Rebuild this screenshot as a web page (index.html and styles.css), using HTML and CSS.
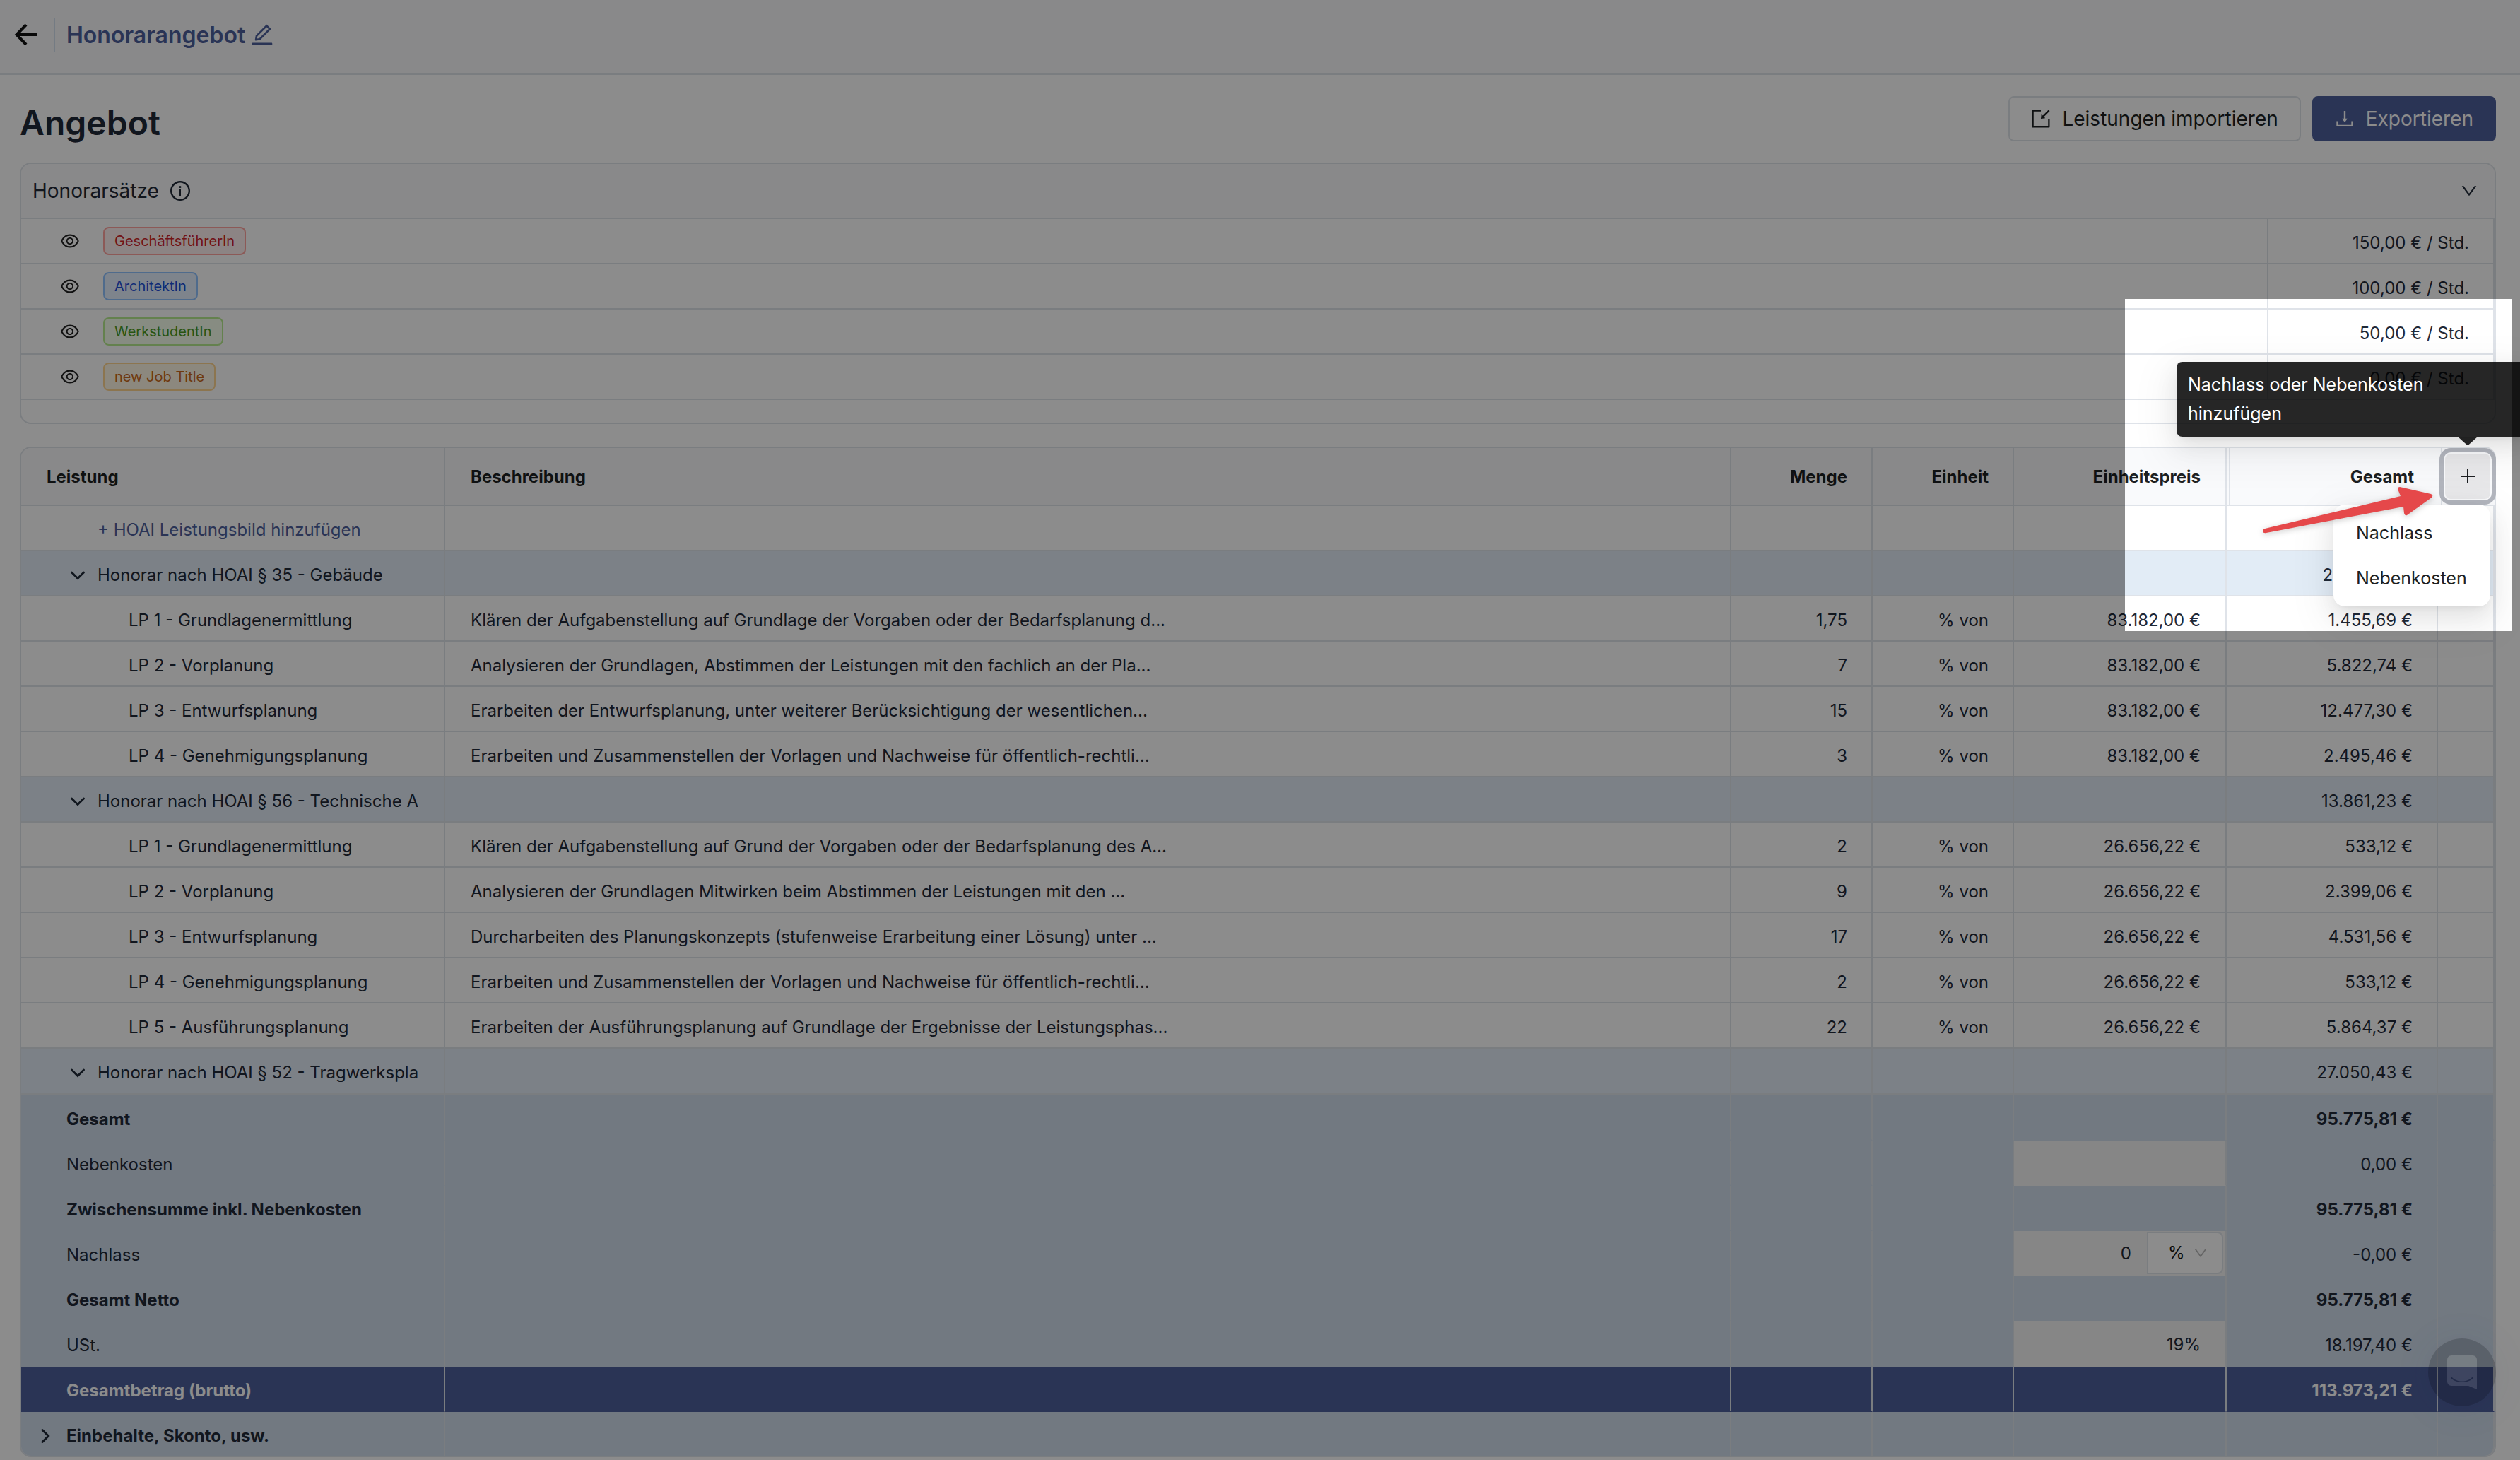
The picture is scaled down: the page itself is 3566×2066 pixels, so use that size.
FILE: index.html
```html
<!DOCTYPE html>
<html lang="de">
<head>
    <meta charset="UTF-8">
    <meta name="viewport" content="width=device-width, initial-scale=1.0">
    <title>Honorarangebot</title>
    <link rel="stylesheet" href="styles.css">
</head>
<body>
    <!-- Icon set -->
    <svg class="sprite" aria-hidden="true">
        <symbol id="i-edit" viewBox="64 64 896 896"><path d="M257.7 752c2 0 4-.2 6-.5L431.9 722c2-.4 3.9-1.3 5.3-2.8l423.9-423.9a9.96 9.96 0 000-14.1L694.9 114.9c-1.9-1.9-4.4-2.9-7.1-2.9s-5.2 1-7.1 2.9L256.8 538.8c-1.5 1.5-2.4 3.3-2.8 5.3l-29.5 168.2a33.5 33.5 0 009.4 29.8c6.6 6.4 14.9 9.9 23.8 9.9zm67.4-174.4L687.8 215l73.3 73.3-362.7 362.6-88.9 15.7 15.6-89zM880 836H144c-17.7 0-32 14.3-32 32v36c0 4.4 3.6 8 8 8h784c4.4 0 8-3.6 8-8v-36c0-17.7-14.3-32-32-32z"/></symbol>
        <symbol id="i-eye" viewBox="64 64 896 896"><path d="M942.2 486.2C847.4 286.5 704.1 186 512 186c-192.2 0-335.4 100.5-430.2 300.3a60.3 60.3 0 000 51.5C176.6 737.5 319.9 838 512 838c192.2 0 335.4-100.5 430.2-300.3 7.7-16.2 7.7-35 0-51.5zM512 766c-161.3 0-279.4-81.8-362.7-254C232.6 339.8 350.7 258 512 258c161.3 0 279.4 81.8 362.7 254C791.5 684.2 673.4 766 512 766zm-4-430c-97.2 0-176 78.8-176 176s78.8 176 176 176 176-78.8 176-176-78.8-176-176-176zm0 288c-61.9 0-112-50.1-112-112s50.1-112 112-112 112 50.1 112 112-50.1 112-112 112z"/></symbol>
        <symbol id="i-info" viewBox="64 64 896 896"><path d="M512 64C264.6 64 64 264.6 64 512s200.6 448 448 448 448-200.6 448-448S759.4 64 512 64zm0 820c-205.4 0-372-166.6-372-372s166.6-372 372-372 372 166.6 372 372-166.6 372-372 372z"/><path d="M464 336a48 48 0 1096 0 48 48 0 10-96 0zm72 112h-48c-4.4 0-8 3.6-8 8v272c0 4.4 3.6 8 8 8h48c4.4 0 8-3.6 8-8V456c0-4.4-3.6-8-8-8z"/></symbol>
        <symbol id="i-import" viewBox="64 64 896 896"><path d="M880 912H144c-17.7 0-32-14.3-32-32V144c0-17.7 14.3-32 32-32h360c4.4 0 8 3.6 8 8v56c0 4.4-3.6 8-8 8H184v656h656V520c0-4.4 3.6-8 8-8h56c4.4 0 8 3.6 8 8v360c0 17.7-14.3 32-32 32zM653.3 424.6l52.2 52.2a8.01 8.01 0 01-4.7 13.6l-179.4 21c-5.1.6-9.5-3.7-8.9-8.9l21-179.4c.8-6.6 8.9-9.4 13.6-4.7l52.4 52.4 256.2-256.2c3.1-3.1 8.2-3.1 11.3 0l42.4 42.4c3.1 3.1 3.1 8.2 0 11.3L653.3 424.6z"/></symbol>
        <symbol id="i-download" viewBox="64 64 896 896"><path d="M505.7 661a8 8 0 0012.6 0l112-141.7c4.1-5.2.4-12.9-6.3-12.9h-74.1V168c0-4.4-3.6-8-8-8h-60c-4.4 0-8 3.6-8 8v338.3H400c-6.7 0-10.4 7.7-6.3 12.9l112 141.8zM878 626h-60c-4.4 0-8 3.6-8 8v154H214V634c0-4.4-3.6-8-8-8h-60c-4.4 0-8 3.6-8 8v198c0 17.7 14.3 32 32 32h684c17.7 0 32-14.3 32-32V634c0-4.4-3.6-8-8-8z"/></symbol>
        <symbol id="i-down" viewBox="64 64 896 896"><path d="M884 256h-75c-5.1 0-9.9 2.5-12.9 6.6L512 654.2 227.9 262.6c-3-4.1-7.8-6.6-12.9-6.6h-75c-6.5 0-10.3 7.4-6.5 12.7l352.6 486.1c12.8 17.6 39 17.6 51.7 0l352.6-486.1c3.9-5.3.1-12.7-6.4-12.7z"/></symbol>
        <symbol id="i-chevron" viewBox="0 0 24 24"><path d="M3.5 8l8.5 8.500 8.500-8.500" fill="none" stroke="currentColor" stroke-width="3" stroke-linecap="round"/></symbol>
    </svg>

    <header class="topbar">
        <button class="icon-btn" type="button" aria-label="Zurück">
            <svg width="32" height="32" viewBox="0 0 32 32"><path d="M17 2L3.500 16 17 30M3.500 16H32" fill="none" stroke="currentColor" stroke-width="4"/></svg>
        </button>
        <span class="divider"></span>
        <a class="crumb" href="#">Honorarangebot</a>
        <button class="icon-btn edit" type="button" aria-label="Bearbeiten"><svg width="32" height="32"><use href="#i-edit"/></svg></button>
    </header>

    <main class="content">
        <div class="title-row">
            <h1>Angebot</h1>
            <button class="btn" type="button"><svg width="28" height="28"><use href="#i-import"/></svg>Leistungen importieren</button>
            <button class="btn primary" type="button"><svg width="28" height="28"><use href="#i-download"/></svg>Exportieren</button>
        </div>

        <section class="card rates">
            <div class="rates-head">
                <span>Honorarsätze</span>
                <svg width="28" height="28"><use href="#i-info"/></svg>
                <button class="icon-btn toggle" type="button" aria-label="Einklappen"><svg width="24" height="24"><use href="#i-down"/></svg></button>
            </div>
            <table>
                <colgroup><col><col class="w-rate"></colgroup>
                <tbody>
                    <tr>
                        <td><div class="role"><svg width="26" height="26"><use href="#i-eye"/></svg><span class="tag red">GeschäftsführerIn</span></div></td>
                        <td class="num">150,00 € / Std.</td>
                    </tr>
                    <tr>
                        <td><div class="role"><svg width="26" height="26"><use href="#i-eye"/></svg><span class="tag blue">ArchitektIn</span></div></td>
                        <td class="num">100,00 € / Std.</td>
                    </tr>
                    <tr>
                        <td><div class="role"><svg width="26" height="26"><use href="#i-eye"/></svg><span class="tag green">WerkstudentIn</span></div></td>
                        <td class="num">50,00 € / Std.</td>
                    </tr>
                    <tr>
                        <td><div class="role"><svg width="26" height="26"><use href="#i-eye"/></svg><span class="tag orange">new Job Title</span></div></td>
                        <td class="num">0,00 € / Std.</td>
                    </tr>
                </tbody>
            </table>
        </section>

        <section class="card offer">
            <table>
                <colgroup>
                    <col class="w-name"><col><col class="w-unit"><col class="w-unit"><col class="w-price"><col class="w-price"><col class="w-action">
                </colgroup>
                <thead>
                    <tr>
                        <th>Leistung</th>
                        <th>Beschreibung</th>
                        <th class="num">Menge</th>
                        <th class="num">Einheit</th>
                        <th class="num">Einheitspreis</th>
                        <th class="num total">Gesamt</th>
                        <th class="action">
                            <button class="add" type="button" aria-label="Nachlass oder Nebenkosten hinzufügen">
                                <svg width="22" height="22" viewBox="0 0 22 22"><path d="M11 1v20M1 11h20" stroke="currentColor" stroke-width="2"/></svg>
                            </button>
                            <div class="tooltip" role="tooltip">Nachlass oder Nebenkosten hinzufügen</div>
                            <div class="menu">
                                <button type="button">Nachlass</button>
                                <button type="button">Nebenkosten</button>
                            </div>
                        </th>
                    </tr>
                </thead>
                <tbody>
                    <tr><td class="lvl-1"><a href="#">+ HOAI Leistungsbild hinzufügen</a></td><td></td><td></td><td></td><td></td><td class="total"></td><td></td></tr>
                    <tr class="group"><td><div class="group-name"><svg width="24" height="24"><use href="#i-chevron"/></svg>Honorar nach HOAI § 35 - Gebäude</div></td><td></td><td></td><td></td><td></td><td class="num total">22.251,19 €</td><td></td></tr>
                    <tr><td class="lvl-2">LP 1 - Grundlagenermittlung</td><td>Klären der Aufgabenstellung auf Grundlage der Vorgaben oder der Bedarfsplanung d...</td><td class="num">1,75</td><td class="num">% von</td><td class="num">83.182,00 €</td><td class="num total">1.455,69 €</td><td></td></tr>
                    <tr><td class="lvl-2">LP 2 - Vorplanung</td><td>Analysieren der Grundlagen, Abstimmen der Leistungen mit den fachlich an der Pla...</td><td class="num">7</td><td class="num">% von</td><td class="num">83.182,00 €</td><td class="num total">5.822,74 €</td><td></td></tr>
                    <tr><td class="lvl-2">LP 3 - Entwurfsplanung</td><td>Erarbeiten der Entwurfsplanung, unter weiterer Berücksichtigung der wesentlichen...</td><td class="num">15</td><td class="num">% von</td><td class="num">83.182,00 €</td><td class="num total">12.477,30 €</td><td></td></tr>
                    <tr><td class="lvl-2">LP 4 - Genehmigungsplanung</td><td>Erarbeiten und Zusammenstellen der Vorlagen und Nachweise für öffentlich-rechtli...</td><td class="num">3</td><td class="num">% von</td><td class="num">83.182,00 €</td><td class="num total">2.495,46 €</td><td></td></tr>
                    <tr class="group"><td><div class="group-name"><svg width="24" height="24"><use href="#i-chevron"/></svg>Honorar nach HOAI § 56 - Technische A</div></td><td></td><td></td><td></td><td></td><td class="num total">13.861,23 €</td><td></td></tr>
                    <tr><td class="lvl-2">LP 1 - Grundlagenermittlung</td><td>Klären der Aufgabenstellung auf Grund der Vorgaben oder der Bedarfsplanung des A...</td><td class="num">2</td><td class="num">% von</td><td class="num">26.656,22 €</td><td class="num total">533,12 €</td><td></td></tr>
                    <tr><td class="lvl-2">LP 2 - Vorplanung</td><td>Analysieren der Grundlagen Mitwirken beim Abstimmen der Leistungen mit den ...</td><td class="num">9</td><td class="num">% von</td><td class="num">26.656,22 €</td><td class="num total">2.399,06 €</td><td></td></tr>
                    <tr><td class="lvl-2">LP 3 - Entwurfsplanung</td><td>Durcharbeiten des Planungskonzepts (stufenweise Erarbeitung einer Lösung) unter ...</td><td class="num">17</td><td class="num">% von</td><td class="num">26.656,22 €</td><td class="num total">4.531,56 €</td><td></td></tr>
                    <tr><td class="lvl-2">LP 4 - Genehmigungsplanung</td><td>Erarbeiten und Zusammenstellen der Vorlagen und Nachweise für öffentlich-rechtli...</td><td class="num">2</td><td class="num">% von</td><td class="num">26.656,22 €</td><td class="num total">533,12 €</td><td></td></tr>
                    <tr><td class="lvl-2">LP 5 - Ausführungsplanung</td><td>Erarbeiten der Ausführungsplanung auf Grundlage der Ergebnisse der Leistungsphas...</td><td class="num">22</td><td class="num">% von</td><td class="num">26.656,22 €</td><td class="num total">5.864,37 €</td><td></td></tr>
                    <tr class="group"><td><div class="group-name"><svg width="24" height="24"><use href="#i-chevron"/></svg>Honorar nach HOAI § 52 - Tragwerkspla</div></td><td></td><td></td><td></td><td></td><td class="num total">27.050,43 €</td><td></td></tr>
                </tbody>
                <tfoot>
                    <tr class="sum first"><td>Gesamt</td><td></td><td></td><td></td><td></td><td class="num total">95.775,81 €</td><td></td></tr>
                    <tr><td><label for="extra">Nebenkosten</label></td><td></td><td></td><td></td><td class="field"><input id="extra" type="text"></td><td class="num total">0,00 €</td><td></td></tr>
                    <tr class="sum"><td>Zwischensumme inkl. Nebenkosten</td><td></td><td></td><td></td><td></td><td class="num total">95.775,81 €</td><td></td></tr>
                    <tr>
                        <td><label for="discount">Nachlass</label></td><td></td><td></td><td></td>
                        <td class="field">
                            <div class="combo">
                                <input id="discount" type="text" value="0">
                                <div class="unit">
                                    <select aria-label="Einheit Nachlass"><option>%</option><option>€</option></select>
                                    <svg width="20" height="20"><use href="#i-down"/></svg>
                                </div>
                            </div>
                        </td>
                        <td class="num total">-0,00 €</td><td></td>
                    </tr>
                    <tr class="sum"><td>Gesamt Netto</td><td></td><td></td><td></td><td></td><td class="num total">95.775,81 €</td><td></td></tr>
                    <tr><td><label for="vat">USt.</label></td><td></td><td></td><td></td><td class="field"><input id="vat" type="text" value="19%"></td><td class="num total">18.197,40 €</td><td></td></tr>
                    <tr class="sum gross"><td>Gesamtbetrag (brutto)</td><td></td><td></td><td></td><td></td><td class="num total">113.973,21 €</td><td></td></tr>
                    <tr class="sum last"><td><div class="more"><svg width="24" height="24"><use href="#i-chevron"/></svg>Einbehalte, Skonto, usw.</div></td><td></td><td></td><td></td><td></td><td class="total"></td><td></td></tr>
                </tfoot>
            </table>
        </section>
    </main>

    <button class="chat" type="button" aria-label="Chat öffnen">
        <svg width="42" height="48" viewBox="0 0 42 48"><path fill="#fff" fill-rule="evenodd" d="M6 0h30a6 6 0 0 1 6 6v42l-12-5H6a6 6 0 0 1-6-6V6a6 6 0 0 1 6-6zM6.500 30.500c7 8 22 8 29 0a1 1 0 0 1 .5 2.500c-8 6.500-22 6.500-30 0a1 1 0 0 1 .5-2.500z"/></svg>
    </button>

    <!-- Tour step: dims everything except the add menu -->
    <div class="spotlight"></div>
    <svg class="pointer" width="248" height="76" viewBox="0 0 248 76"><path d="M7 60L199 14l-4-10q0-3 3-3l44 10q4 2 1 5l-35 25q-3 1-4-3l-1-9L9 66q-4 1-5-2 0-3 3-4z" fill="#e5484a"/></svg>
</body>
</html>
```
FILE: styles.css
```css
* {
    box-sizing: border-box;
}

body {
    margin: 0;
    position: relative;
    min-height: 100vh;
    overflow: hidden;
    background: #fff;
    color: #1f2937;
    font-family: Inter, "Liberation Sans", sans-serif;
    font-size: 24px;
}

svg {
    display: block;
    flex: none;
    fill: currentColor;
}

button,
input,
select {
    font: inherit;
    color: inherit;
}

a {
    color: #4e609c;
    text-decoration: none;
}

.sprite {
    position: absolute;
    width: 0;
    height: 0;
}

.icon-btn {
    padding: 0;
    border: 0;
    background: none;
    color: #111;
    cursor: pointer;
}

/* Top bar */
.topbar {
    display: flex;
    align-items: center;
    height: 106px;
    padding: 0 20px 6px;
    background: #f9fafc;
    border-bottom: 2px solid #dfe3e9;
}

.divider {
    width: 2px;
    height: 48px;
    margin: 0 16px 0 24px;
    background: #d3e0ee;
}

.crumb {
    font-size: 32px;
    font-weight: 600;
}

.edit {
    margin-left: 8px;
    color: #4e609c;
}

/* Page title */
.content {
    padding: 30px 34px 4px 28px;
}

.title-row {
    display: flex;
    gap: 16px;
    margin-bottom: 18px;
}

h1 {
    flex: 1;
    margin: 0;
    font-size: 48px;
    font-weight: 600;
    line-height: 76px;
}

.btn {
    display: flex;
    align-items: center;
    gap: 16px;
    height: 64px;
    padding: 0 30px;
    border: 2px solid #dfe3e9;
    border-radius: 8px;
    background: #fff;
    color: #1d1f22;
    font-size: 28px;
    cursor: pointer;
}

.btn.primary {
    border-color: #4e609c;
    background: #4e609c;
    color: #fff;
}

/* Cards and tables */
.card {
    border: 2px solid #dfe3e9;
    border-radius: 16px;
}

table {
    width: 100%;
    table-layout: fixed;
    border-spacing: 0;
}

td,
th {
    height: 64px;
    padding: 6px 34px 0 36px;
    border: 0 solid #dfe3e9;
    border-width: 0 2px 2px 0;
    text-align: left;
    line-height: 32px;
    white-space: nowrap;
}

.num {
    text-align: right;
}

.rates {
    margin-bottom: 32px;
    padding-bottom: 32px;
}

.rates-head {
    display: flex;
    align-items: center;
    gap: 16px;
    height: 78px;
    padding: 0 24px 0 16px;
    border-bottom: 2px solid #dfe3e9;
    border-radius: 14px 14px 0 0;
    background: #f9fafc;
    font-size: 28px;
}

.toggle {
    margin-left: auto;
    color: #1f2937;
}

.w-rate {
    width: 320px;
}

.role {
    display: flex;
    align-items: center;
    gap: 34px;
    padding: 0 20px 6px;
    color: #222;
}

.tag {
    height: 40px;
    padding: 0 14px;
    border: 2px solid;
    border-radius: 8px;
    font-size: 20px;
    line-height: 36px;
}

.red {
    color: #cf2328;
    background: #fff1f0;
    border-color: #ffa39e;
}

.blue {
    color: #1d4fd8;
    background: #e6f0ff;
    border-color: #91c3ff;
}

.green {
    color: #4a9a20;
    background: #f6ffed;
    border-color: #b7eb8f;
}

.orange {
    color: #c9681c;
    background: #fff7e6;
    border-color: #ffd591;
}

/* Offer table */
.w-name { width: 600px; }
.w-unit { width: 200px; }
.w-price { width: 300px; }
.w-action { width: 80px; }

th {
    height: 82px;
    padding-top: 2px;
    background: #f9fafc;
    color: #1d1f22;
    font-weight: 700;
}

th:first-child {
    border-top-left-radius: 14px;
}

.total {
    border-left-width: 2px;
}

th.total {
    border-right-width: 0;
    box-shadow: inset 2px 0 #f9fafc, inset 4px 0 #dfe3e9;
}

.lvl-1 {
    padding-left: 108px;
}

.lvl-2 {
    padding-left: 152px;
}

.group td {
    background: #e2ecf6;
}

.group-name {
    display: flex;
    align-items: center;
    gap: 16px;
    margin: 0 -34px 0 32px;
    overflow: hidden;
}

.action {
    position: relative;
    padding: 0 6px 0 10px;
    border-right-width: 0;
    border-top-right-radius: 14px;
    box-shadow: inset 4px 0 #f9fafc, inset 6px 0 #dfe3e9;
}

.add {
    display: flex;
    align-items: center;
    justify-content: center;
    width: 64px;
    height: 64px;
    padding: 0;
    border: 0;
    border-radius: 8px;
    background: #e8e8ea;
    color: #1d1f22;
    outline: 6px solid #b3b6be;
    outline-offset: 2px;
}

.tooltip {
    position: absolute;
    right: -50px;
    bottom: 96px;
    z-index: 3;
    width: 500px;
    padding: 12px 40px 12px 16px;
    border-radius: 8px;
    background: rgba(0, 0, 0, 0.85);
    color: #fff;
    font-size: 25px;
    font-weight: 400;
    line-height: 41px;
    white-space: normal;
    box-shadow: 0 12px 32px rgba(0, 0, 0, 0.08), 0 6px 12px -8px rgba(0, 0, 0, 0.12), 0 18px 56px 16px rgba(0, 0, 0, 0.05);
}

.tooltip::after {
    content: "";
    position: absolute;
    top: 100%;
    right: 74px;
    width: 28px;
    height: 12px;
    background: rgba(0, 0, 0, 0.85);
    clip-path: polygon(0 0, 100% 0, 58% 88%, 50% 100%, 42% 88%);
}

.menu {
    position: absolute;
    top: 80px;
    right: 6px;
    z-index: 2;
    display: flex;
    flex-direction: column;
    width: 222px;
    padding: 8px;
    border-radius: 16px;
    background: #fff;
    font-size: 25px;
    font-weight: 400;
    box-shadow: 0 12px 32px rgba(0, 0, 0, 0.08), 0 6px 12px -8px rgba(0, 0, 0, 0.12), 0 18px 56px 16px rgba(0, 0, 0, 0.05);
}

.menu button {
    height: 64px;
    padding: 0 24px;
    border: 0;
    background: none;
    text-align: left;
}

/* Totals */
tfoot td {
    padding-left: 64px;
    border-bottom-color: transparent;
    background: #cfdceb;
}

tfoot .num,
tfoot .total {
    padding-left: 0;
}

.first td {
    height: 66px;
    border-top-width: 2px;
}

.sum {
    font-weight: 700;
}

.gross td {
    background: #4e609c;
    color: #fff;
}

.last td {
    height: 62px;
    border-bottom-width: 0;
}

.last td:first-child {
    border-bottom-left-radius: 14px;
}

.last td:last-child {
    border-bottom-right-radius: 14px;
}

.more {
    display: flex;
    align-items: center;
    gap: 18px;
    margin-left: -42px;
}

.more svg {
    transform: rotate(-90deg);
}

tfoot .field {
    padding: 0;
    background: #f5f5f5;
}

.field input {
    display: block;
    width: 100%;
    height: 62px;
    padding: 2px 34px 0 0;
    border: 0;
    background: none;
    text-align: right;
}

.combo {
    display: flex;
    align-items: center;
}

.combo input {
    flex: 1;
    min-width: 0;
    padding: 0 22px 0 0;
}

.unit {
    position: relative;
    width: 108px;
    margin-right: 2px;
    color: #111;
}

.unit select {
    display: block;
    width: 100%;
    height: 60px;
    padding: 0 0 0 28px;
    border: 2px solid #dfe3e9;
    border-radius: 0 8px 8px 0;
    background: #fff;
    appearance: none;
}

.unit svg {
    position: absolute;
    top: 20px;
    right: 22px;
    color: #b8b8b8;
}

/* Floating elements */
.chat {
    position: fixed;
    right: 34px;
    bottom: 76px;
    display: flex;
    align-items: center;
    justify-content: center;
    width: 96px;
    height: 96px;
    border: 0;
    border-radius: 50%;
    background: #02061c;
    opacity: 0.2;
    box-shadow: 0 2px 12px rgba(0, 0, 0, 0.1), 0 4px 64px rgba(60, 80, 200, 0.3);
}

.spotlight {
    position: absolute;
    top: 423px;
    right: 12px;
    z-index: 10;
    width: 547px;
    height: 470px;
    box-shadow: 0 0 0 4000px rgba(0, 0, 0, 0.45);
    pointer-events: none;
}

.pointer {
    position: absolute;
    top: 688px;
    right: 120px;
    z-index: 11;
    filter: drop-shadow(0 2px 4px rgba(0, 0, 0, 0.2));
    pointer-events: none;
}
```
